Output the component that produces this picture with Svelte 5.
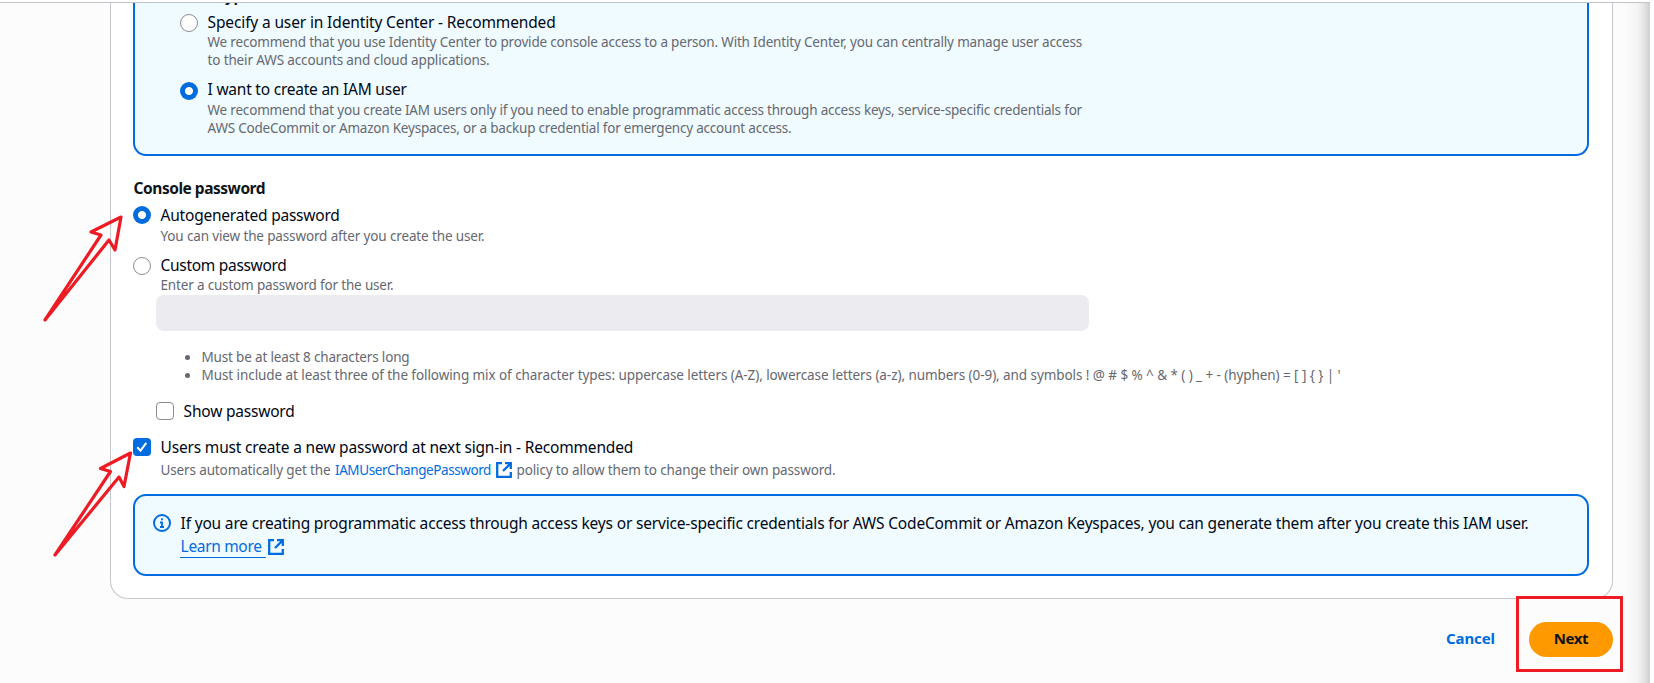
<script>
  // Spreads letters so that a line of text takes exactly the given width.
  function fit(node, width) {
    const range = document.createRange();
    range.selectNodeContents(node);
    const natural = range.getBoundingClientRect().width;
    const count = node.textContent.length;
    node.style.letterSpacing = `${(width - natural) / count}px`;
  }

  const arrows = [
    'M121 217 L91 232 L101 235 L45 320 L109 240 L115 250 Z',
    'M130.500 453 L100.500 468.500 L110.500 471.500 L55 555 L119 477 L124 486.500 Z'
  ];

  const userTypes = [
    {
      title: 'Specify a user in Identity Center - Recommended', width: 348, checked: false,
      lines: [
        ['We recommend that you use Identity Center to provide console access to a person. With Identity Center, you can centrally manage user access', 874.5],
        ['to their AWS accounts and cloud applications.', 282]
      ]
    },
    {
      title: 'I want to create an IAM user', width: 199, checked: true,
      lines: [
        ['We recommend that you create IAM users only if you need to enable programmatic access through access keys, service-specific credentials for', 874.5],
        ['AWS CodeCommit or Amazon Keyspaces, or a backup credential for emergency account access.', 584]
      ]
    }
  ];

  const rules = [
    ['Must be at least 8 characters long', 208],
    ["Must include at least three of the following mix of character types: uppercase letters (A-Z), lowercase letters (a-z), numbers (0-9), and symbols ! @ # $ % ^ & * ( ) _ + - (hyphen) = [ ] { } | '", 1139]
  ];
</script>

{#snippet external()}
  <svg class="ext" viewBox="0 0 16 16" fill="none" stroke="currentColor" stroke-width="2.300">
    <path d="M6 1.200H1.200V14.800H14.800V10M9 1.200H14.800V7M14.800 1.200L7 9" />
  </svg>
{/snippet}

<div class="page">
  <div class="main">
    <section class="card">
      <div class="info types">
        <div class="caption">User type</div>
        {#each userTypes as t}
          <div class="option">
            <span class="radio" class:on={t.checked}></span>
            <div>
              <div class="label"><span use:fit={t.width}>{t.title}</span></div>
              {#each t.lines as [text, w]}
                <div class="desc"><span use:fit={w}>{text}</span></div>
              {/each}
            </div>
          </div>
        {/each}
      </div>

      <h2><span use:fit={131.5}>Console password</span></h2>
      <div class="option auto">
        <span class="radio on"></span>
        <div>
          <div class="label"><span use:fit={179}>Autogenerated password</span></div>
          <div class="desc"><span use:fit={324}>You can view the password after you create the user.</span></div>
        </div>
      </div>
      <div class="option custom">
        <span class="radio"></span>
        <div>
          <div class="label"><span use:fit={126}>Custom password</span></div>
          <div class="desc"><span use:fit={233}>Enter a custom password for the user.</span></div>
        </div>
      </div>

      <div class="nested">
        <div class="field"></div>
        <ul>
          {#each rules as [text, w]}
            <li class="desc"><span use:fit={w}>{text}</span></li>
          {/each}
        </ul>
        <div class="option show">
          <span class="box"></span>
          <div class="label"><span use:fit={111}>Show password</span></div>
        </div>
      </div>

      <div class="option must">
        <span class="box on">
          <svg viewBox="0 0 18 18" fill="none" stroke="#fff" stroke-width="2"><path d="M4.300 9.300L7.500 12.700L13.300 4.800" /></svg>
        </span>
        <div>
          <div class="label"><span use:fit={472.5}>Users must create a new password at next sign-in - Recommended</span></div>
          <div class="desc policy">
            <span use:fit={170}>Users automatically get the</span>
            <a href="#policy"><span use:fit={156}>IAMUserChangePassword</span>{@render external()}</a>
            <span use:fit={319}>policy to allow them to change their own password.</span>
          </div>
        </div>
      </div>

      <div class="info note">
        <svg class="i" viewBox="0 0 18 18" fill="none" stroke="currentColor" stroke-width="2">
          <circle cx="9" cy="9" r="8" /><path d="M9 4.300V6.300M7 8.500H9V13M7 13H11" stroke-width="1.800" />
        </svg>
        <div>
          <div class="label"><span use:fit={1348}>If you are creating programmatic access through access keys or service-specific credentials for AWS CodeCommit or Amazon Keyspaces, you can generate them after you create this IAM user.</span></div>
          <a class="label learn" href="#learn"><span class="under"><span use:fit={81}>Learn more</span></span>{@render external()}</a>
        </div>
      </div>
    </section>

    <footer>
      <button class="cancel"><span use:fit={49}>Cancel</span></button>
      <button class="next"><span use:fit={34.5}>Next</span></button>
    </footer>
  </div>

  <svg class="marks" viewBox="0 0 1654 683" fill="none" stroke="#ed1c24" stroke-width="3.200" stroke-linejoin="round">
    {#each arrows as d}<path {d} />{/each}
    <rect x="1517.500" y="597.500" width="104" height="73" stroke-width="3" stroke-linejoin="miter" />
  </svg>
</div>

<style>
  .page {
    position: relative;
    box-sizing: border-box;
    width: 1654px;
    height: 683px;
    overflow: hidden;
    background: #fff;
    padding: 2px 4px 0 0;
    font-family: "Noto Sans", "Open Sans", sans-serif;
    color: #0f141a;
  }
  .main {
    box-sizing: border-box;
    height: 681px;
    overflow: hidden;
    border-top: 1px solid #c1c5ca;
    padding: 0 37px 0 110px;
    background: linear-gradient(90deg, transparent 1624px, #f5f5f5 1637px, #e4e4e4 1644px, #cecece 1650px), #fcfcfd;
  }
  .card {
    box-sizing: border-box;
    height: 596px;
    border: 1px solid #c6c6cd;
    border-top: 0;
    border-radius: 0 0 18px 18px;
    background: #fff;
    padding: 0 23px 0 22px;
  }
  .info {
    box-sizing: border-box;
    border: 2px solid #006ce0;
    border-radius: 13px;
    background: #f0fbff;
  }
  .types {
    height: 153px;
    border-top: 0;
    border-radius: 0 0 13px 13px;
    padding-left: 45px;
    overflow: hidden;
  }
  .caption {
    font: 700 15px/18px "Noto Sans", sans-serif;
    height: 12px;
    margin-top: -16px;
    padding-bottom: 14px;
  }
  .option { display: flex; gap: 9px; }
  .types .option { height: 68px; }
  .label { font-size: 15.500px; line-height: 22px; white-space: nowrap; color: #000716; text-indent: 0.600px; }
  .desc { font-size: 13.500px; line-height: 18px; white-space: nowrap; color: #656871; text-indent: 0.500px; }
  .types .label { height: 21px; line-height: 20px; margin-top: -1px; }
  .types .option:last-child .label { margin-top: -2px; height: 22px; }
  .radio, .box {
    box-sizing: border-box;
    flex: none;
    width: 18px;
    height: 18px;
    border: 1px solid #8c8c94;
    background: #fff;
  }
  .radio { border-radius: 50%; margin-top: 1px; }
  .radio.on {
    border: 0;
    background: radial-gradient(circle, #fff 3.600px, #006ce0 4.400px);
  }
  .box { border-radius: 4px; }
  .box.on { border: 0; background: #006ce0; }
  .box svg { display: block; width: 18px; height: 18px; }
  h2 { margin: 21px 0 0; font-size: 15.500px; line-height: 22px; height: 27px; font-weight: 700; text-indent: 0.600px; }
  .auto { height: 50px; padding-top: 1px; }
  .custom { height: 38px; padding-top: 1px; margin-bottom: 1px; }
  .auto .label { height: 22px; line-height: 20px; }
  .custom .label { height: 21px; line-height: 20px; margin-top: -1px; }
  .nested { padding-left: 23px; }
  .field { width: 933px; height: 36px; border-radius: 8px; background: #ebebf0; }
  ul { margin: 17px 0 0; padding: 0 0 0 45px; height: 54px; }
  .show { height: 36px; }
  .show .label, .must .label { margin-top: -2px; }
  .policy { display: flex; align-items: center; gap: 4px; height: 20px; line-height: 20px; margin-top: 2px; }
  a { color: #006ce0; text-decoration: none; }
  .policy a { display: flex; align-items: center; gap: 5px; }
  .ext { width: 16px; height: 16px; flex: none; }
  .must { height: 56px; }
  .note { display: flex; gap: 9px; height: 82px; padding: 18px 0 0 18px; }
  .i { width: 18px; height: 18px; color: #006ce0; flex: none; }
  .note .label { line-height: 22px; height: 23px; }
  .note .label:first-child { margin-top: -2px; }
  .learn.label { display: flex; align-items: center; gap: 2px; color: #006ce0; }
  .under { height: 22px; border-bottom: 1px solid #006ce0; padding-right: 4px; }
  footer { display: flex; justify-content: flex-end; align-items: center; gap: 34px; margin-top: 22px; height: 36px; margin-right: 0; }
  button { border: 0; background: none; padding: 0; font: 700 15px/20px "Noto Sans", sans-serif; color: #006ce0; }
  button span { position: relative; top: -1px; }
  .next { width: 84px; height: 35px; border-radius: 18px; background: #ff9900; color: #0f141a; }
  .marks { position: absolute; left: 0; top: 0; width: 1654px; height: 683px; pointer-events: none; }
</style>
